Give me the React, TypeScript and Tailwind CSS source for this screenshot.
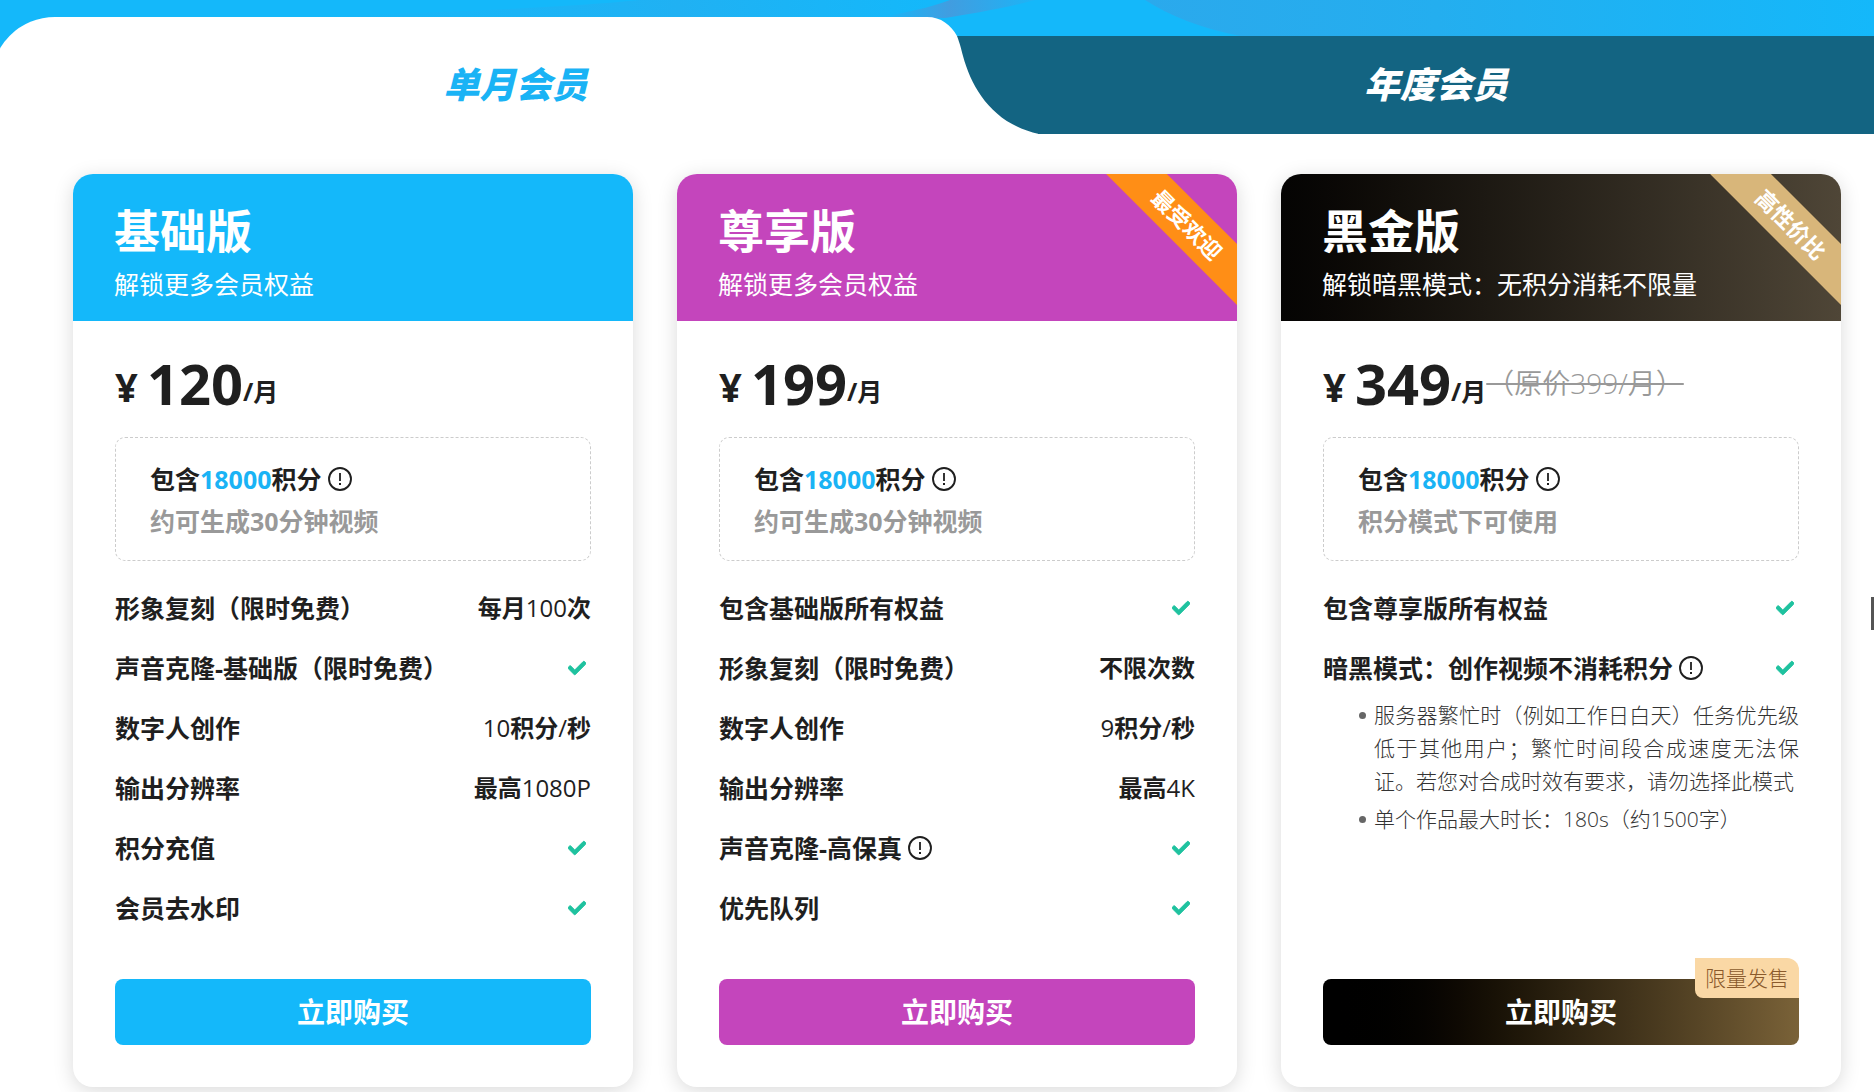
import { useState, type ReactNode } from 'react'
import { FaCheck } from 'react-icons/fa'

type Feature = {
  label: string
  info?: boolean
  value?: ReactNode
  notes?: string[]
}

type Plan = {
  name: string
  desc: string
  price: number
  original?: string
  hint: string
  header: string
  button: string
  ribbon?: string
  ribbonColor?: string
  tag?: string
  features: Feature[]
}

const plans: Plan[] = [
  {
    name: '基础版',
    desc: '解锁更多会员权益',
    price: 120,
    hint: '约可生成30分钟视频',
    header: 'bg-[#14b8fa]',
    button: 'bg-[#14b8fa]',
    features: [
      { label: '形象复刻（限时免费）', value: <>每月<Num>100</Num>次</> },
      { label: '声音克隆-基础版（限时免费）' },
      { label: '数字人创作', value: <><Num>10</Num>积分<Num>/</Num>秒</> },
      { label: '输出分辨率', value: <>最高<Num>1080P</Num></> },
      { label: '积分充值' },
      { label: '会员去水印' },
    ],
  },
  {
    name: '尊享版',
    desc: '解锁更多会员权益',
    price: 199,
    hint: '约可生成30分钟视频',
    header: 'bg-[#c445bc]',
    button: 'bg-[#c445bc]',
    ribbon: '最受欢迎',
    ribbonColor: 'bg-[#ff8e16]',
    features: [
      { label: '包含基础版所有权益' },
      { label: '形象复刻（限时免费）', value: '不限次数' },
      { label: '数字人创作', value: <><Num>9</Num>积分<Num>/</Num>秒</> },
      { label: '输出分辨率', value: <>最高<Num>4K</Num></> },
      { label: '声音克隆-高保真', info: true },
      { label: '优先队列' },
    ],
  },
  {
    name: '黑金版',
    desc: '解锁暗黑模式：无积分消耗不限量',
    price: 349,
    original: '（原价399/月）',
    hint: '积分模式下可使用',
    header: 'bg-linear-to-r from-[#050403] to-[#4f4637]',
    button: 'bg-linear-to-r from-black to-[#7a6238]',
    ribbon: '高性价比',
    ribbonColor: 'bg-[#d8b67a]',
    tag: '限量发售',
    features: [
      { label: '包含尊享版所有权益' },
      {
        label: '暗黑模式：创作视频不消耗积分',
        info: true,
        notes: [
          '服务器繁忙时（例如工作日白天）任务优先级低于其他用户；繁忙时间段合成速度无法保证。若您对合成时效有要求，请勿选择此模式',
          '单个作品最大时长：180s（约1500字）',
        ],
      },
    ],
  },
]

function Num({ children }: { children: ReactNode }) {
  return <span className="text-2xl leading-none font-normal">{children}</span>
}

function InfoIcon() {
  return (
    <svg viewBox="0 0 24 24" className="size-6 shrink-0" fill="none" stroke="#1f1f1f">
      <circle cx="12" cy="12" r="11" strokeWidth="1.9" />
      <path d="M12 6v8" strokeWidth="1.8" />
      <path d="M12 16v2" strokeWidth="2" />
    </svg>
  )
}

function Tabs() {
  const [tab, setTab] = useState('month')

  return (
    <div className="relative flex h-[134px] overflow-hidden bg-[#14b8fa] pt-[17px]" role="tablist">
      {/* Background tint */}
      <svg
        viewBox="0 0 1874 36"
        preserveAspectRatio="none"
        className="absolute inset-x-0 top-0 h-9 w-full"
      >
        <defs>
          <linearGradient id="tint" x1="0" x2="1">
            <stop offset="0" stopColor="#2ba9ec" />
            <stop offset="0.4" stopColor="#24aeef" />
            <stop offset="1" stopColor="#14b8fa" />
          </linearGradient>
          <linearGradient id="haze" x1="0" x2="1">
            <stop offset="0" stopColor="#14b8fa" />
            <stop offset="0.6" stopColor="#20b1f3" />
            <stop offset="1" stopColor="#14b8fa" />
          </linearGradient>
          <linearGradient id="streak" x1="0" x2="1">
            <stop offset="0" stopColor="#14b8fa" />
            <stop offset="0.45" stopColor="#419de0" />
            <stop offset="1" stopColor="#1cb4f6" />
          </linearGradient>
        </defs>
        <path d="M300 17C450 12 560 8 640 0H930V17z" fill="url(#haze)" />
        <path d="M880 18C905 12 930 8 950 0H1035C1005 8 970 14 945 18z" fill="url(#streak)" />
        <path d="M1145 0C1170 16 1200 28 1240 36H1874V0z" fill="url(#tint)" />
      </svg>

      <button
        type="button"
        role="tab"
        aria-selected={tab === 'month'}
        onClick={() => setTab('month')}
        className="relative -ml-[9px] w-[50%] rounded-tl-[64px] bg-white pt-[19px] pl-[112px] text-[36px] leading-none font-black text-[#1ab3f5] italic"
      >
        单月会员
      </button>
      <svg viewBox="0 0 112 117" className="relative -ml-px h-[117px] w-28 shrink-0">
        <path d="M20 19H112V117H20z" fill="#136482" />
        <path d="M0 0C14 0 24 8 30 19C33 27 34 31 36 39C45 72 66 107 112 117H0z" fill="#fff" />
      </svg>
      <button
        type="button"
        role="tab"
        aria-selected={tab === 'year'}
        onClick={() => setTab('year')}
        className="relative mt-[19px] -ml-px flex-1 bg-[#136482] pr-10 text-[36px] leading-none font-black text-white italic"
      >
        年度会员
      </button>
    </div>
  )
}

function PlanCard({ plan }: { plan: Plan }) {
  return (
    <article className="flex min-w-0 flex-1 flex-col rounded-[20px] bg-white shadow-[0_4px_20px_rgba(0,0,0,0.15)]">
      {/* Header */}
      <header className={`relative h-[147px] overflow-hidden rounded-t-[20px] px-[41px] pt-7 text-white ${plan.header}`}>
        <h2 className="text-[46px] leading-[56px] font-bold">{plan.name}</h2>
        <p className="mt-2 text-[25px] leading-9">{plan.desc}</p>
        {plan.ribbon && (
          <div
            className={`absolute top-[29px] -right-[50px] w-[200px] rotate-45 text-center text-[22px] leading-[43px] font-bold ${plan.ribbonColor}`}
          >
            {plan.ribbon}
          </div>
        )}
      </header>

      <div className="flex flex-1 flex-col px-[42px] pb-[42px]">
        {/* Price */}
        <div className="mt-6 flex h-[76px] items-end font-bold">
          <span className="text-[40px] leading-[68px]">¥</span>
          <span className="ml-[9px] text-[56px] leading-[76px]">{plan.price}</span>
          <span className="text-[25px] leading-[60px]">/月</span>
          {plan.original && (
            <del className="text-[28px] leading-[76px] font-[350] text-[#999]">{plan.original}</del>
          )}
        </div>

        {/* Points */}
        <div className="mt-4 h-[124px] rounded-[10px] border border-dashed border-[#ccc] px-[34px] pt-5 font-bold">
          <p className="flex items-center gap-[6px] text-[25px] leading-[42px]">
            <span>
              包含<span className="text-[#1ab3f5]">18000</span>积分
            </span>
            <InfoIcon />
          </p>
          <p className="text-[25px] leading-[42px] text-[#999]">{plan.hint}</p>
        </div>

        {/* Features */}
        <ul className="mt-[29px] flex flex-col gap-6 text-[25px] leading-9 font-bold">
          {plan.features.map((f) => (
            <li key={f.label}>
              <div className="flex h-9 items-center justify-between">
                <span className="flex items-center gap-[6px]">
                  {f.label}
                  {f.info && <InfoIcon />}
                </span>
                {f.value ? (
                  <span className="text-2xl">{f.value}</span>
                ) : (
                  <FaCheck className="mr-[5px] size-[18px] stroke-current stroke-[28]" color="#1fc29f" />
                )}
              </div>
              {f.notes && (
                <ul className="mt-[13px] flex flex-col gap-[5px] pl-9 text-[21px] leading-[33px] font-light text-[#333]">
                  {f.notes.map((note) => (
                    <li key={note} className="flex gap-2">
                      <span className="mt-[13px] size-[7px] shrink-0 rounded-full bg-[#666]" />
                      <span className="text-justify">{note}</span>
                    </li>
                  ))}
                </ul>
              )}
            </li>
          ))}
        </ul>

        {/* Buy */}
        <div className="relative mt-auto pt-[53px]">
          <button
            type="button"
            className={`block h-[66px] w-full rounded-lg text-[28px] font-bold text-white ${plan.button}`}
          >
            立即购买
          </button>
          {plan.tag && (
            <span className="absolute top-8 right-0 rounded-tr-xl rounded-bl-lg bg-[#fad8a5] px-[10px] text-[21px] leading-10 font-light text-[#8a5a2c]">
              {plan.tag}
            </span>
          )}
        </div>
      </div>
    </article>
  )
}

export default function App() {
  return (
    <main className="relative min-h-screen overflow-hidden bg-white font-['Open_Sans','Noto_Sans_CJK_SC',sans-serif] text-[#1f1f1f]">
      <Tabs />
      <section className="flex gap-11 pt-10 pr-[33px] pb-[5px] pl-[73px]">
        {plans.map((plan) => (
          <PlanCard key={plan.name} plan={plan} />
        ))}
      </section>
      {/* Floating handle on the window edge */}
      <div className="absolute top-[597px] right-0 h-[33px] w-[3px] bg-[#555]" />
    </main>
  )
}
